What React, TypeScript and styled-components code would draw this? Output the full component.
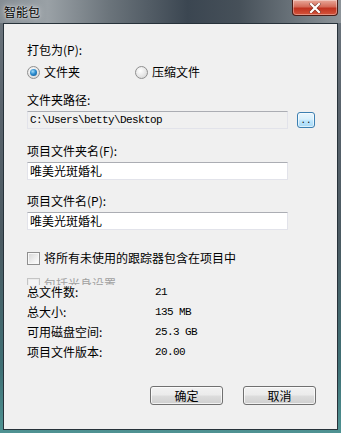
import React from "react";
import styled, { createGlobalStyle } from "styled-components";

const GlobalStyle = createGlobalStyle`
  html, body {
    margin: 0;
    padding: 0;
    width: 341px;
    height: 433px;
    overflow: hidden;
  }
  body {
    font-family: "Noto Sans CJK SC", "DejaVu Sans", sans-serif;
    font-size: 12px;
    color: #000;
  }
`;

const Window = styled.div`
  width: 341px;
  height: 433px;
  display: flex;
  flex-direction: column;
  box-sizing: border-box;
  background: linear-gradient(
    180deg,
    #6e777f 0%,
    #59636c 25%,
    #4b5a62 55%,
    #3f7075 85%,
    #4f9393 100%
  );
`;

const TitleBar = styled.div`
  height: 23px;
  flex: none;
  display: flex;
  justify-content: space-between;
  align-items: flex-start;
  background: linear-gradient(
    90deg,
    #858d94 0%,
    #9aa1a6 14%,
    #6b747b 32%,
    #3b4651 55%,
    #465059 70%,
    #6a737a 86%,
    #8d9499 100%
  );
`;

const Title = styled.span`
  margin: 4px 0 0 4px;
  line-height: 15px;
  font-size: 12px;
  color: #000;
  text-shadow: 0 0 6px rgba(255, 255, 255, 0.9), 0 0 2px rgba(255, 255, 255, 0.8);
`;

const CloseButton = styled.div`
  width: 46px;
  height: 16px;
  margin-right: 3px;
  box-sizing: border-box;
  border: 1px solid #4a1c16;
  border-top: none;
  border-radius: 0 0 4px 4px;
  background: linear-gradient(180deg, #e9a99a 0%, #d46a58 45%, #c0321f 55%, #d4553c 100%);
  box-shadow: inset 0 0 0 1px rgba(255, 255, 255, 0.35);
  display: flex;
  align-items: center;
  justify-content: center;
`;

const Client = styled.div`
  flex: 1;
  margin: 0 3px 3px 3px;
  border: 1px solid #27323a;
  background: #f0f0f0;
  display: flex;
  flex-direction: column;
  padding: 19px 21px 24px 23px;
  box-sizing: border-box;
`;

const Label = styled.div<{ $gap?: number }>`
  line-height: 14px;
  margin-top: ${(p) => p.$gap ?? 0}px;
  white-space: nowrap;
`;

const RadioRow = styled.div`
  display: flex;
  align-items: center;
  margin-top: 8px;
  height: 14px;
`;

const RadioOption = styled.label<{ $width?: number }>`
  display: flex;
  align-items: center;
  gap: 4px;
  width: ${(p) => (p.$width ? `${p.$width}px` : "auto")};
  line-height: 14px;
`;

const RadioCircle = styled.span<{ $checked?: boolean }>`
  width: 13px;
  height: 13px;
  box-sizing: border-box;
  border-radius: 50%;
  border: 1px solid #8f8f8f;
  background: radial-gradient(circle at 40% 35%, #ffffff 0%, #e6e6e6 55%, #cfcfcf 100%);
  display: flex;
  align-items: center;
  justify-content: center;

  &::after {
    content: "";
    display: ${(p) => (p.$checked ? "block" : "none")};
    width: 7px;
    height: 7px;
    border-radius: 50%;
    background: radial-gradient(circle at 40% 35%, #a6dcf8 0%, #2b8ccf 45%, #0f4f87 100%);
  }
`;

const InputRow = styled.div`
  display: flex;
  align-items: center;
  gap: 9px;
  margin-top: 4px;
`;

const TextBox = styled.div<{ $readOnly?: boolean; $gap?: number }>`
  width: 261px;
  height: 18px;
  margin-top: ${(p) => p.$gap ?? 0}px;
  box-sizing: border-box;
  border: 1px solid #e2e3ea;
  border-top-color: #abadb3;
  background: ${(p) => (p.$readOnly ? "#f0f0f0" : "#ffffff")};
  padding: 0 2px;
  display: flex;
  align-items: center;
  line-height: 16px;
  white-space: nowrap;
`;

const MonoText = styled.span`
  font-family: "Liberation Mono", "DejaVu Sans Mono", monospace;
  font-size: 11px;
  letter-spacing: -0.6px;
`;

const BrowseButton = styled.div`
  width: 18px;
  height: 16px;
  box-sizing: border-box;
  border: 1px solid #3c7fb1;
  border-radius: 3px;
  background: linear-gradient(180deg, #eaf6fd 0%, #d9f0fc 45%, #bee6fd 55%, #a7d9f5 100%);
  box-shadow: inset 0 0 0 1px rgba(255, 255, 255, 0.6);
  display: flex;
  align-items: flex-end;
  justify-content: center;
  font-family: "Liberation Mono", monospace;
  font-size: 9px;
  line-height: 11px;
`;

const CheckRow = styled.label<{ $disabled?: boolean; $gap?: number; $clip?: number }>`
  display: flex;
  align-items: flex-start;
  gap: 4px;
  line-height: 14px;
  height: ${(p) => (p.$clip ? `${p.$clip}px` : "auto")};
  overflow: ${(p) => (p.$clip ? "hidden" : "visible")};
  margin-top: ${(p) => p.$gap ?? 0}px;
  white-space: nowrap;
  color: ${(p) => (p.$disabled ? "#a0a0a0" : "#000")};
`;

const CheckBox = styled.span<{ $disabled?: boolean }>`
  flex: none;
  width: 13px;
  height: 13px;
  margin-top: 1px;
  box-sizing: border-box;
  border: 1px solid ${(p) => (p.$disabled ? "#c4c4c4" : "#8f8f8f")};
  background: ${(p) =>
    p.$disabled
      ? "#f4f4f4"
      : "linear-gradient(135deg, #d5d5d5 0%, #f0f0f0 60%, #ffffff 100%)"};
  box-shadow: inset 0 0 0 1px ${(p) => (p.$disabled ? "#ececec" : "#f8f8f8")};
`;

const Stats = styled.div`
  display: flex;
  flex-direction: column;
  gap: 6px;
`;

const StatRow = styled.div`
  display: flex;
  line-height: 14px;
`;

const StatLabel = styled.span`
  width: 128px;
`;

const ButtonBar = styled.div`
  margin-top: auto;
  display: flex;
  justify-content: flex-end;
  gap: 20px;
`;

const DialogButton = styled.div`
  width: 73px;
  height: 19px;
  box-sizing: border-box;
  border: 1px solid #707070;
  border-radius: 3px;
  background: linear-gradient(180deg, #f2f2f2 0%, #ebebeb 48%, #dddddd 52%, #cfcfcf 100%);
  box-shadow: inset 0 0 0 1px rgba(255, 255, 255, 0.7);
  display: flex;
  align-items: center;
  justify-content: center;
  line-height: 14px;
`;

const CloseIcon = () => (
  <svg width="12" height="10" viewBox="0 0 12 10">
    <path
      d="M2 1 L10 9 M10 1 L2 9"
      stroke="#3a1510"
      strokeWidth="3.4"
      strokeLinecap="square"
      opacity="0.5"
    />
    <path d="M2 1 L10 9 M10 1 L2 9" stroke="#ffffff" strokeWidth="2.2" strokeLinecap="square" />
  </svg>
);

const stats = [
  { label: "总文件数:", value: "21" },
  { label: "总大小:", value: "135 MB" },
  { label: "可用磁盘空间:", value: "25.3 GB" },
  { label: "项目文件版本:", value: "20.00" },
];

export default function App() {
  return (
    <>
      <GlobalStyle />
      <Window>
        <TitleBar>
          <Title>智能包</Title>
          <CloseButton>
            <CloseIcon />
          </CloseButton>
        </TitleBar>
        <Client>
          <Label>打包为(P):</Label>
          <RadioRow>
            <RadioOption $width={108}>
              <RadioCircle $checked />
              文件夹
            </RadioOption>
            <RadioOption>
              <RadioCircle />
              压缩文件
            </RadioOption>
          </RadioRow>

          <Label $gap={14}>文件夹路径:</Label>
          <InputRow>
            <TextBox $readOnly>
              <MonoText>C:\Users\betty\Desktop</MonoText>
            </TextBox>
            <BrowseButton>..</BrowseButton>
          </InputRow>

          <Label $gap={15}>项目文件夹名(F):</Label>
          <TextBox $gap={4}>唯美光斑婚礼</TextBox>

          <Label $gap={14}>项目文件名(P):</Label>
          <TextBox $gap={4}>唯美光斑婚礼</TextBox>

          <CheckRow $gap={21}>
            <CheckBox />
            将所有未使用的跟踪器包含在项目中
          </CheckRow>
          <CheckRow $gap={12} $clip={8} $disabled>
            <CheckBox $disabled />
            包括光身设置
          </CheckRow>

          <Stats>
            {stats.map((s) => (
              <StatRow key={s.label}>
                <StatLabel>{s.label}</StatLabel>
                <MonoText>{s.value}</MonoText>
              </StatRow>
            ))}
          </Stats>

          <ButtonBar>
            <DialogButton>确定</DialogButton>
            <DialogButton>取消</DialogButton>
          </ButtonBar>
        </Client>
      </Window>
    </>
  );
}
